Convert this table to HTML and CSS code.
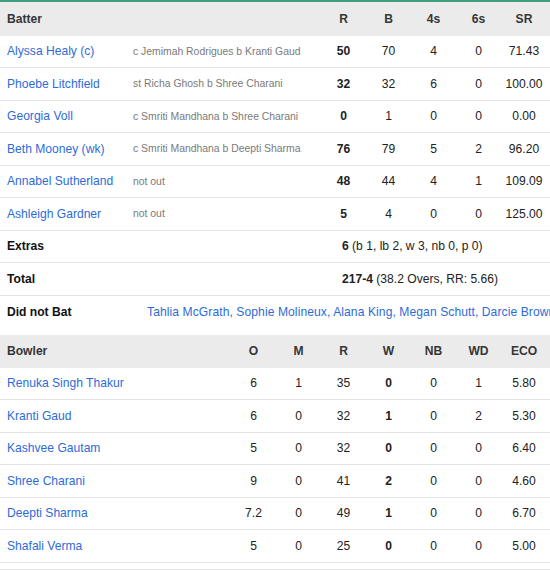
FILE: index.html
```html
<!DOCTYPE html>
<html>
<head>
<meta charset="utf-8">
<link rel="stylesheet" href="styles.css">
</head>
<body>
<div class="card">
  <div class="row bat head">
    <div class="name">Batter</div><div></div>
    <div class="num">R</div><div class="num">B</div><div class="num">4s</div><div class="num">6s</div><div class="num">SR</div>
  </div>
  <div class="row bat">
    <div class="name link">Alyssa Healy (c)</div><div class="how">c Jemimah Rodrigues b Kranti Gaud</div>
    <div class="num b">50</div><div class="num">70</div><div class="num">4</div><div class="num">0</div><div class="num">71.43</div>
  </div>
  <div class="row bat">
    <div class="name link">Phoebe Litchfield</div><div class="how">st Richa Ghosh b Shree Charani</div>
    <div class="num b">32</div><div class="num">32</div><div class="num">6</div><div class="num">0</div><div class="num">100.00</div>
  </div>
  <div class="row bat">
    <div class="name link">Georgia Voll</div><div class="how">c Smriti Mandhana b Shree Charani</div>
    <div class="num b">0</div><div class="num">1</div><div class="num">0</div><div class="num">0</div><div class="num">0.00</div>
  </div>
  <div class="row bat">
    <div class="name link">Beth Mooney (wk)</div><div class="how">c Smriti Mandhana b Deepti Sharma</div>
    <div class="num b">76</div><div class="num">79</div><div class="num">5</div><div class="num">2</div><div class="num">96.20</div>
  </div>
  <div class="row bat">
    <div class="name link">Annabel Sutherland</div><div class="how">not out</div>
    <div class="num b">48</div><div class="num">44</div><div class="num">4</div><div class="num">1</div><div class="num">109.09</div>
  </div>
  <div class="row bat">
    <div class="name link">Ashleigh Gardner</div><div class="how">not out</div>
    <div class="num b">5</div><div class="num">4</div><div class="num">0</div><div class="num">0</div><div class="num">125.00</div>
  </div>
  <div class="row bat">
    <div class="name strong">Extras</div><div></div>
    <div class="span"><b>6</b> (b 1, lb 2, w 3, nb 0, p 0)</div>
  </div>
  <div class="row bat">
    <div class="name strong">Total</div><div></div>
    <div class="span"><b>217-4</b> (38.2 Overs, RR: 5.66)</div>
  </div>
  <div class="row dnb">
    <div class="name strong">Did not Bat</div>
    <div class="list link">Tahlia McGrath, Sophie Molineux, Alana King, Megan Schutt, Darcie Brown</div>
  </div>

  <div class="row bowl head">
    <div class="name">Bowler</div>
    <div class="num">O</div><div class="num">M</div><div class="num">R</div><div class="num">W</div><div class="num">NB</div><div class="num">WD</div><div class="num">ECO</div>
  </div>
  <div class="row bowl">
    <div class="name link">Renuka Singh Thakur</div>
    <div class="num">6</div><div class="num">1</div><div class="num">35</div><div class="num b">0</div><div class="num">0</div><div class="num">1</div><div class="num">5.80</div>
  </div>
  <div class="row bowl">
    <div class="name link">Kranti Gaud</div>
    <div class="num">6</div><div class="num">0</div><div class="num">32</div><div class="num b">1</div><div class="num">0</div><div class="num">2</div><div class="num">5.30</div>
  </div>
  <div class="row bowl">
    <div class="name link">Kashvee Gautam</div>
    <div class="num">5</div><div class="num">0</div><div class="num">32</div><div class="num b">0</div><div class="num">0</div><div class="num">0</div><div class="num">6.40</div>
  </div>
  <div class="row bowl">
    <div class="name link">Shree Charani</div>
    <div class="num">9</div><div class="num">0</div><div class="num">41</div><div class="num b">2</div><div class="num">0</div><div class="num">0</div><div class="num">4.60</div>
  </div>
  <div class="row bowl">
    <div class="name link">Deepti Sharma</div>
    <div class="num">7.2</div><div class="num">0</div><div class="num">49</div><div class="num b">1</div><div class="num">0</div><div class="num">0</div><div class="num">6.70</div>
  </div>
  <div class="row bowl">
    <div class="name link">Shafali Verma</div>
    <div class="num">5</div><div class="num">0</div><div class="num">25</div><div class="num b">0</div><div class="num">0</div><div class="num">0</div><div class="num">5.00</div>
  </div>
  <div class="next"></div>
</div>
</body>
</html>
```
FILE: styles.css
```css
html, body {
  margin: 0;
  padding: 0;
  background: #ffffff;
  overflow: hidden;
}
body {
  font-family: "Liberation Sans", Arial, sans-serif;
  font-size: 12.1px;
  color: #222222;
  width: 550px;
}
.card {
  border-top: 2px solid #3f9f80;
  width: 550px;
}
.row {
  display: grid;
  align-items: center;
  height: 32.5px;
  box-sizing: border-box;
  border-bottom: 1px solid #e4e4e4;
  white-space: nowrap;
}
.bat {
  grid-template-columns: 126px 195px 45px 45px 45px 45px 46px;
}
.bowl {
  grid-template-columns: 231px 45px 45px 45px 45px 45px 45px 46px;
}
.head {
  background: #ebebeb;
  font-weight: bold;
  color: #363636;
  border-bottom: none;
}
.bat.head {
  height: 33.5px;
}
.name {
  padding-left: 7px;
}
.link {
  color: #2d6bd8;
}
.strong {
  font-weight: bold;
  color: #111111;
}
.how {
  padding-left: 7px;
  font-size: 10.4px;
  color: #7a7a7a;
}
.num {
  text-align: center;
}
.b {
  font-weight: bold;
}
.span {
  grid-column: 3 / 8;
  padding-left: 21px;
}
.dnb {
  grid-template-columns: 126px auto;
  border-bottom: none;
  margin-bottom: 7px;
}
.list {
  padding-left: 21px;
  letter-spacing: 0.08px;
  overflow: visible;
}
.next {
  margin-top: 6px;
  border-top: 1px solid #e4e4e4;
}
```
